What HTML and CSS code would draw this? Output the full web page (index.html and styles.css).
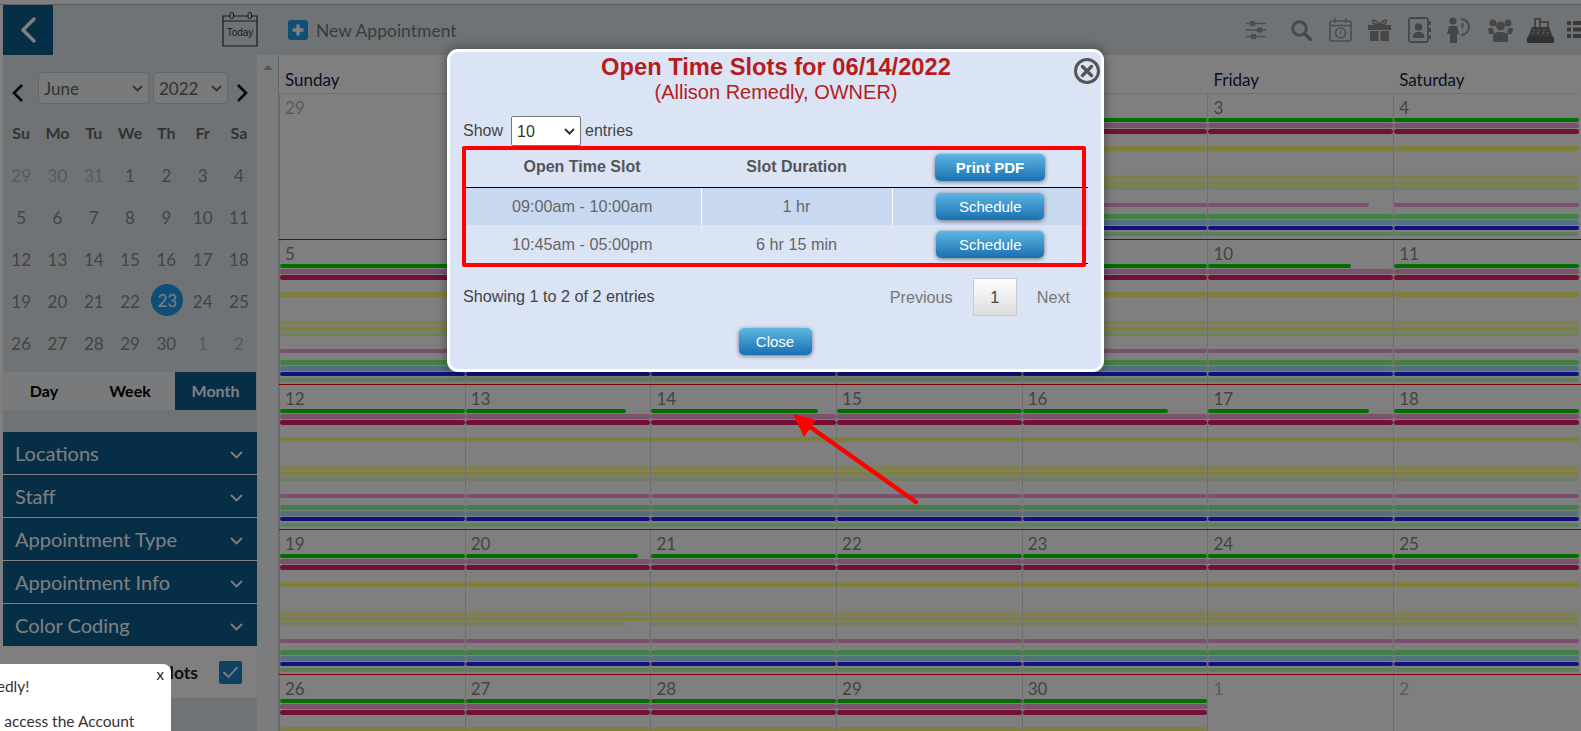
FILE: index.html
```html
<!DOCTYPE html>
<html lang="en">
<head>
<meta charset="utf-8">
<title>Calendar</title>
<link rel="stylesheet" href="styles.css">
</head>
<body>
<div class="topline"></div>
<div class="app">
  <header class="header">
    <a class="back"><svg width="18" height="26" viewBox="0 0 18 26"><path d="M15 2 4 13l11 11" fill="none" stroke="#fff" stroke-width="3.5" stroke-linecap="round" stroke-linejoin="round"/></svg></a>
    <div class="today">
      <svg width="36" height="36" viewBox="0 0 36 36"><path d="M1 5h34v30H1zM1 10h34" fill="none" stroke="#333" stroke-width="1.2"/><rect x="8" y="1.5" width="3.5" height="6" rx="1.5" fill="#dfe8ef" stroke="#333"/><rect x="26" y="1.5" width="3.5" height="6" rx="1.5" fill="#dfe8ef" stroke="#333"/><text x="18" y="25" text-anchor="middle" class="today-text">Today</text></svg>
    </div>
    <div class="new-appt">
      <svg width="20" height="20" viewBox="0 0 20 20"><rect width="20" height="20" rx="3" fill="#1c9dee"/><path d="M10 4.5v11M4.5 10h11" stroke="#fff" stroke-width="3.4"/></svg>
      <span>New Appointment</span>
    </div>
    <div class="tools">
      <svg width="20" height="20" viewBox="0 0 20 20" class="t1"><path d="M0 3.5h20M0 10h20M0 16.5h20" stroke="#999" stroke-width="1.6"/><rect x="4" y="1" width="5" height="5" fill="#999"/><rect x="11" y="7.5" width="5" height="5" fill="#999"/><rect x="5" y="14" width="5" height="5" fill="#999"/></svg>
      <svg width="21" height="21" viewBox="0 0 21 21" class="t2"><circle cx="8.5" cy="8.5" r="6.8" fill="none" stroke="#909090" stroke-width="3"/><path d="m13.5 13.5 6 6" stroke="#909090" stroke-width="3.4" stroke-linecap="round"/></svg>
      <svg width="23" height="24" viewBox="0 0 23 24" class="t3"><rect x="1" y="3" width="21" height="20" rx="2" fill="none" stroke="#999" stroke-width="1.6"/><path d="M1 7.5h21M6 0v5M17 0v5" stroke="#999" stroke-width="1.6"/><circle cx="11.5" cy="15" r="5" fill="none" stroke="#999" stroke-width="1.6"/><path d="M11.5 12.5V15.5" stroke="#999" stroke-width="1.4"/></svg>
      <svg width="23" height="22" viewBox="0 0 23 22" class="t4"><path d="M0 6h23v5H0zM2 12h8.500v10H2zM12.500 12H21v10h-8.500z" fill="#8c8c8c"/><path d="M11.500 6C8 0 3 0 5 3.500 6 5 9 6 11.500 6c2.500 0 5.500-1 6.500-2.500C20 0 15 0 11.500 6z" fill="none" stroke="#8c8c8c" stroke-width="1.6"/></svg>
      <svg width="24" height="26" viewBox="0 0 24 26" class="t5"><rect x="1" y="1" width="19" height="24" rx="2" fill="none" stroke="#8c8c8c" stroke-width="1.8"/><circle cx="10.500" cy="10" r="3.800" fill="#8c8c8c"/><path d="M4.500 21c0-4.500 2.500-6 6-6s6 1.500 6 6z" fill="#8c8c8c"/><path d="M22 4v4M22 11v4M22 18v4" stroke="#8c8c8c" stroke-width="2"/></svg>
      <svg width="25" height="26" viewBox="0 0 25 26" class="t6"><circle cx="6" cy="4" r="3.500" fill="#8c8c8c"/><path d="M2 9h8l2 8h-2v9H3v-9H0z" fill="#8c8c8c"/><path d="M14 2a8 8 0 1 1 0 16" fill="none" stroke="#8c8c8c" stroke-width="1.800"/><path d="M15.500 6v5" stroke="#8c8c8c" stroke-width="1.800"/></svg>
      <svg width="25" height="23" viewBox="0 0 25 23" class="t7"><circle cx="5" cy="4" r="3.500" fill="#8c8c8c"/><circle cx="20" cy="4" r="3.500" fill="#8c8c8c"/><circle cx="12.500" cy="7" r="4.500" fill="#8c8c8c"/><path d="M0 9h5l1 6H1zM20 9h5l-1 6h-5zM5 23v-6c0-3 3-4 7.500-4s7.500 1 7.500 4v6z" fill="#8c8c8c"/></svg>
      <svg width="27" height="25" viewBox="0 0 27 25" class="t8"><path d="M5 9h17l4 10H1z" fill="#707070"/><path d="M8 9V1h5v8M14 4h7v5" fill="none" stroke="#707070" stroke-width="1.600"/><rect y="19" width="27" height="6" rx="1" fill="#606060"/><path d="M6 12h2M11 12h2M16 12h2M5 15h2M10 15h2M15 15h2M20 15h2" stroke="#ccc"/></svg>
      <svg width="14" height="22" viewBox="0 0 14 22" class="t9"><path d="M0 2h4v4H0zM6 2h8v4H6zM0 8.500h4v4H0zM6 8.500h8v4H6zM0 15h4v4H0zM6 15h8v4H6z" fill="#707070"/></svg>
    </div>
  </header>

  <div class="body">
    <aside class="side">
      <div class="nav">
        <svg width="13" height="20" viewBox="0 0 13 20" class="chev"><path d="M11 2 3 10l8 8" fill="none" stroke="#111" stroke-width="2.600"/></svg>
        <select class="sel-month"><option>June</option></select>
        <select class="sel-year"><option>2022</option></select>
        <svg width="13" height="20" viewBox="0 0 13 20" class="chev"><path d="m2 2 8 8-8 8" fill="none" stroke="#111" stroke-width="2.600"/></svg>
      </div>
      <div class="mini dow"><b>Su</b><b>Mo</b><b>Tu</b><b>We</b><b>Th</b><b>Fr</b><b>Sa</b></div>
      <div class="mini days">
        <span class="off">29</span><span class="off">30</span><span class="off">31</span><span>1</span><span>2</span><span>3</span><span>4</span>
        <span>5</span><span>6</span><span>7</span><span>8</span><span>9</span><span>10</span><span>11</span>
        <span>12</span><span>13</span><span>14</span><span>15</span><span>16</span><span>17</span><span>18</span>
        <span>19</span><span>20</span><span>21</span><span>22</span><span class="cur"><em>23</em></span><span>24</span><span>25</span>
        <span>26</span><span>27</span><span>28</span><span>29</span><span>30</span><span class="off">1</span><span class="off">2</span>
      </div>
      <div class="views"><a>Day</a><a>Week</a><a class="on">Month</a></div>
      <ul class="acc">
        <li>Locations<svg width="13" height="8" viewBox="0 0 13 8"><path d="m1 1 5.500 5.500L12 1" fill="none" stroke="#fff" stroke-width="1.800"/></svg></li>
        <li>Staff<svg width="13" height="8" viewBox="0 0 13 8"><path d="m1 1 5.500 5.500L12 1" fill="none" stroke="#fff" stroke-width="1.800"/></svg></li>
        <li>Appointment Type<svg width="13" height="8" viewBox="0 0 13 8"><path d="m1 1 5.500 5.500L12 1" fill="none" stroke="#fff" stroke-width="1.800"/></svg></li>
        <li>Appointment Info<svg width="13" height="8" viewBox="0 0 13 8"><path d="m1 1 5.500 5.500L12 1" fill="none" stroke="#fff" stroke-width="1.800"/></svg></li>
        <li>Color Coding<svg width="13" height="8" viewBox="0 0 13 8"><path d="m1 1 5.500 5.500L12 1" fill="none" stroke="#fff" stroke-width="1.800"/></svg></li>
      </ul>
      <div class="slots-row">
        <span>Open Time Slots</span>
        <i class="check"><svg width="17" height="14" viewBox="0 0 17 14"><path d="m1.500 7 5 5L15.500 2" fill="none" stroke="#fff" stroke-width="1.800"/></svg></i>
      </div>
    </aside>
    <div class="track"><i></i></div>
    <main class="cal">
      <div class="week head"><div>Sunday</div><div>Monday</div><div>Tuesday</div><div>Wednesday</div><div>Thursday</div><div>Friday</div><div>Saturday</div></div>
      <div class="week">
        <div class="c off"><p>29</p></div>
        <div class="c off"><p>30</p></div>
        <div class="c off"><p>31</p></div>
        <div class="c"><p>1</p><i class="g"></i><i class="p"></i><i class="r"></i><i class="y"></i><i class="k"></i><i class="j"></i><i class="l"></i><i class="q"></i><i class="m"></i><i class="s"></i><i class="n"></i><i class="f"></i></div>
        <div class="c"><p>2</p><i class="g"></i><i class="p"></i><i class="r"></i><i class="y"></i><i class="k"></i><i class="j"></i><i class="l"></i><i class="q"></i><i class="m"></i><i class="s"></i><i class="n"></i><i class="f"></i></div>
        <div class="c"><p>3</p><i class="g"></i><i class="p"></i><i class="r"></i><i class="y"></i><i class="k"></i><i class="j"></i><i class="l"></i><i class="q" style="width:161px"></i><i class="m"></i><i class="s"></i><i class="n"></i><i class="f"></i></div>
        <div class="c"><p>4</p><i class="g"></i><i class="p"></i><i class="r"></i><i class="y"></i><i class="k"></i><i class="j"></i><i class="l"></i><i class="q"></i><i class="m"></i><i class="s"></i><i class="n"></i><i class="f"></i></div>
      </div>
      <div class="week">
        <div class="c"><p>5</p><i class="g"></i><i class="p"></i><i class="r"></i><i class="y"></i><i class="k"></i><i class="j"></i><i class="l"></i><i class="q"></i><i class="m"></i><i class="s"></i><i class="n"></i><i class="f"></i></div>
        <div class="c"><p>6</p><i class="g"></i><i class="p"></i><i class="r"></i><i class="y"></i><i class="k"></i><i class="j"></i><i class="l"></i><i class="q"></i><i class="m"></i><i class="s"></i><i class="n"></i><i class="f"></i></div>
        <div class="c"><p>7</p><i class="g"></i><i class="p"></i><i class="r"></i><i class="y"></i><i class="k"></i><i class="j"></i><i class="l"></i><i class="q"></i><i class="m"></i><i class="s"></i><i class="n"></i><i class="f"></i></div>
        <div class="c"><p>8</p><i class="g"></i><i class="p"></i><i class="r"></i><i class="y"></i><i class="k"></i><i class="j"></i><i class="l"></i><i class="q"></i><i class="m"></i><i class="s"></i><i class="n"></i><i class="f"></i></div>
        <div class="c"><p>9</p><i class="g"></i><i class="p"></i><i class="r"></i><i class="y"></i><i class="k"></i><i class="j"></i><i class="l"></i><i class="q"></i><i class="m"></i><i class="s"></i><i class="n"></i><i class="f"></i></div>
        <div class="c"><p>10</p><i class="g" style="width:143px"></i><i class="p"></i><i class="r"></i><i class="y"></i><i class="k"></i><i class="j"></i><i class="l"></i><i class="q"></i><i class="m"></i><i class="s"></i><i class="n"></i><i class="f"></i></div>
        <div class="c"><p>11</p><i class="g"></i><i class="p"></i><i class="r"></i><i class="y"></i><i class="k"></i><i class="j"></i><i class="l"></i><i class="q"></i><i class="m"></i><i class="s"></i><i class="n"></i><i class="f"></i></div>
      </div>
      <div class="week">
        <div class="c"><p>12</p><i class="g"></i><i class="p"></i><i class="r"></i><i class="y"></i><i class="k"></i><i class="j"></i><i class="l"></i><i class="q"></i><i class="m"></i><i class="s"></i><i class="n"></i><i class="f"></i></div>
        <div class="c"><p>13</p><i class="g" style="width:160px"></i><i class="p"></i><i class="r"></i><i class="y"></i><i class="k"></i><i class="j"></i><i class="l"></i><i class="q"></i><i class="m"></i><i class="s"></i><i class="n"></i><i class="f"></i></div>
        <div class="c"><p>14</p><i class="g" style="width:167px"></i><i class="p"></i><i class="r"></i><i class="y"></i><i class="k"></i><i class="j"></i><i class="l"></i><i class="q"></i><i class="m"></i><i class="s"></i><i class="n"></i><i class="f"></i></div>
        <div class="c"><p>15</p><i class="g"></i><i class="p"></i><i class="r"></i><i class="y"></i><i class="k"></i><i class="j"></i><i class="l"></i><i class="q"></i><i class="m"></i><i class="s"></i><i class="n"></i><i class="f"></i></div>
        <div class="c"><p>16</p><i class="g" style="width:145px"></i><i class="p"></i><i class="r"></i><i class="y"></i><i class="k"></i><i class="j"></i><i class="l"></i><i class="q"></i><i class="m"></i><i class="s"></i><i class="n"></i><i class="f"></i></div>
        <div class="c"><p>17</p><i class="g" style="width:161px"></i><i class="p"></i><i class="r"></i><i class="y"></i><i class="k"></i><i class="j"></i><i class="l"></i><i class="q"></i><i class="m"></i><i class="s"></i><i class="n"></i><i class="f"></i></div>
        <div class="c"><p>18</p><i class="g"></i><i class="p"></i><i class="r"></i><i class="y"></i><i class="k"></i><i class="j"></i><i class="l"></i><i class="q"></i><i class="m"></i><i class="s"></i><i class="n"></i><i class="f"></i></div>
      </div>
      <div class="week">
        <div class="c"><p>19</p><i class="g"></i><i class="p"></i><i class="r"></i><i class="y"></i><i class="k"></i><i class="j"></i><i class="l"></i><i class="q"></i><i class="m"></i><i class="s"></i><i class="n"></i><i class="f"></i></div>
        <div class="c"><p>20</p><i class="g" style="width:172px"></i><i class="p"></i><i class="r"></i><i class="y"></i><i class="k"></i><i class="j"></i><i class="l" style="width:160px"></i><i class="q"></i><i class="m"></i><i class="s"></i><i class="n"></i><i class="f"></i></div>
        <div class="c"><p>21</p><i class="g"></i><i class="p"></i><i class="r"></i><i class="y"></i><i class="k"></i><i class="j"></i><i class="l"></i><i class="q"></i><i class="m"></i><i class="s"></i><i class="n"></i><i class="f"></i></div>
        <div class="c"><p>22</p><i class="g"></i><i class="p"></i><i class="r"></i><i class="y"></i><i class="k"></i><i class="j"></i><i class="l"></i><i class="q"></i><i class="m"></i><i class="s"></i><i class="n"></i><i class="f"></i></div>
        <div class="c"><p>23</p><i class="g"></i><i class="p"></i><i class="r"></i><i class="y"></i><i class="k"></i><i class="j"></i><i class="l"></i><i class="q"></i><i class="m"></i><i class="s"></i><i class="n"></i><i class="f"></i></div>
        <div class="c"><p>24</p><i class="g"></i><i class="p"></i><i class="r"></i><i class="y"></i><i class="k"></i><i class="j"></i><i class="l"></i><i class="q"></i><i class="m"></i><i class="s"></i><i class="n"></i><i class="f"></i></div>
        <div class="c"><p>25</p><i class="g"></i><i class="p"></i><i class="r"></i><i class="y"></i><i class="k"></i><i class="j"></i><i class="l"></i><i class="q"></i><i class="m"></i><i class="s"></i><i class="n"></i><i class="f"></i></div>
      </div>
      <div class="week">
        <div class="c"><p>26</p><i class="g"></i><i class="p"></i><i class="r"></i><i class="y"></i></div>
        <div class="c"><p>27</p><i class="g"></i><i class="p"></i><i class="r"></i><i class="y"></i></div>
        <div class="c"><p>28</p><i class="g"></i><i class="p"></i><i class="r"></i><i class="y"></i></div>
        <div class="c"><p>29</p><i class="g"></i><i class="p"></i><i class="r"></i><i class="y"></i></div>
        <div class="c"><p>30</p><i class="g"></i><i class="p"></i><i class="r"></i><i class="y"></i></div>
        <div class="c off"><p>1</p></div>
        <div class="c off"><p>2</p></div>
      </div>
    </main>
  </div>
</div>

<div class="overlay"></div>

<div class="toast">
  <span class="toast-x">x</span>
  <p>Welcome, Allison Remedly!</p>
  <p class="toast-2">Click the profile icon to&nbsp; access the Account</p>
</div>

<section class="modal">
  <svg class="modal-x" width="28" height="28" viewBox="0 0 28 28"><circle cx="14" cy="14" r="11.500" fill="none" stroke="#555" stroke-width="3"/><path d="m9.500 9.500 9 9M18.500 9.500l-9 9" stroke="#555" stroke-width="3.400" stroke-linecap="round"/></svg>
  <h2>Open Time Slots for 06/14/2022</h2>
  <h3>(Allison Remedly, OWNER)</h3>
  <div class="length">Show <select><option>10</option></select> entries</div>
  <table class="slots">
    <thead><tr><th>Open Time Slot</th><th>Slot Duration</th><th><button class="btn strong">Print PDF</button></th></tr></thead>
    <tbody>
      <tr class="odd"><td>09:00am - 10:00am</td><td>1 hr</td><td><button class="btn">Schedule</button></td></tr>
      <tr><td>10:45am - 05:00pm</td><td>6 hr 15 min</td><td><button class="btn">Schedule</button></td></tr>
    </tbody>
  </table>
  <div class="foot">
    <span>Showing 1 to 2 of 2 entries</span>
    <div class="pager"><a>Previous</a><a class="page">1</a><a>Next</a></div>
  </div>
  <div class="close-row"><button class="btn close">Close</button></div>
  <div class="redbox"></div>
</section>

<svg class="arrow" width="1581" height="731" viewBox="0 0 1581 731"><path d="M916 502 806 424" stroke="#f00" stroke-width="4.500" stroke-linecap="round"/><path d="m793 414 23 6-12 17z" fill="#f00"/></svg>
</body>
</html>
```
FILE: styles.css
```css
* { box-sizing: border-box; }
html, body { margin: 0; height: 731px; overflow: hidden; }
body { position: relative; background: #fff; font-family: Lato, "Open Sans", sans-serif; color: #333; }

.topline { height: 5px; border-bottom: 1px solid #bbb; background: #fff; }
.app { padding-left: 3px; }

.header { display: flex; align-items: center; height: 50px; background: #e0e7ec; }
.back { width: 50px; height: 50px; display: flex; align-items: center; justify-content: center; background: #0c5c8c; }
.today { margin-left: 169px; height: 36px; margin-top: -2px; }
.today-text { font: 400 10px "Liberation Sans", sans-serif; fill: #333; }
.new-appt { display: flex; align-items: center; gap: 8px; margin-left: 30px; font-size: 17.500px; color: #777; }
.tools { display: flex; align-items: center; margin-left: auto; }
.tools svg { display: block; flex: none; }
.tools .t1 { margin-right: 25px; }
.tools .t2 { margin-right: 17px; }
.tools .t3 { margin-right: 16px; }
.tools .t4 { margin-right: 17px; }
.tools .t5 { margin-right: 15px; }
.tools .t6 { margin-right: 16px; }
.tools .t7 { margin-right: 14px; }
.tools .t8 { margin-right: 13px; }

.body { display: flex; height: 676px; overflow: hidden; }
.side { width: 254px; flex: none; background: #e0e7ec; }
.track { width: 22px; flex: none; background: #f6f8fa; border-right: 1px solid #ccc; padding: 10px 0 0 6px; }
.track i { display: block; width: 0; height: 0; border: 5px solid transparent; border-top: 0; border-bottom-color: #aaa; border-bottom-width: 5px; }

.nav { display: flex; align-items: center; height: 32px; margin-top: 17px; padding-left: 8px; }
.nav select { appearance: none; height: 32px; border: 1px solid #ccc; border-radius: 4px; background: #f2f4f6 url("data:image/svg+xml,%3Csvg xmlns='http://www.w3.org/2000/svg' width='11' height='7'%3E%3Cpath d='m1 1 4.500 4.500L10 1' fill='none' stroke='%23666' stroke-width='1.800'/%3E%3C/svg%3E") no-repeat right 5px center; font: 17px Lato, sans-serif; color: #666; padding: 0 0 0 5px; }
.sel-month { width: 111px; margin: 0 4px 0 14px; }
.sel-year { width: 75px; margin-right: 8px; }
.chev { margin-top: 10px; }

.mini { display: grid; grid-template-columns: repeat(7, 36.300px); text-align: center; }
.dow { margin-top: 17px; height: 24px; line-height: 24px; font-size: 16px; }
.dow b { font-weight: 700; color: #666; }
.days { margin-top: 13px; grid-auto-rows: 42px; font-size: 17px; }
.days span { display: flex; align-items: center; justify-content: center; color: #888; height: 42px; padding-top: 8px; margin-top: -8px; }
.days .off { color: #b4b4b4; }
.days .cur { padding-left: 2px; }
.days em { font-style: normal; display: flex; align-items: center; justify-content: center; width: 32px; height: 32px; margin-top: -2px; border-radius: 50%; background: #1c9dee; color: #fff; }

.views { display: flex; height: 38px; margin-top: 4px; background: #f2f5f8; width: 253px; line-height: 38px; text-align: center; font-size: 16px; font-weight: 700; color: #000; }
.views a:nth-child(1) { width: 82px; }
.views a:nth-child(2) { width: 90px; }
.views .on { flex: 1; background: #0c5c8c; color: #fff; }

.acc { list-style: none; margin: 22px 0 0; padding: 0; }
.acc li { display: flex; align-items: center; justify-content: space-between; height: 43px; padding: 0 14px 0 12px; background: #0c5c8c; border-top: 1px solid #fff; color: #fff; font-size: 20px; }
.acc li:first-child { border-top: 0; height: 42px; }
.acc svg { margin-top: 3px; }

.slots-row { display: flex; align-items: center; justify-content: flex-end; height: 52px; background: #fff; padding-right: 15px; gap: 21px; font-size: 17.500px; font-weight: 700; color: #222; }
.check { display: flex; align-items: center; justify-content: center; width: 23px; height: 23px; background: #1c84c8; border-radius: 2px; }

.cal { flex: 1; min-width: 0; overflow: hidden; }
.week { display: grid; grid-template-columns: repeat(7, 185.700px); height: 145px; border-top: 1px solid #f00; }
.week.head { height: 39px; border-top: 0; font-size: 17px; color: #202050; }
.head div { padding: 14px 0 0 6px; border-bottom: 1px solid #e4e4e4; }
.week:nth-child(2) { border-top: 0; }
.c { position: relative; border-left: 1px solid #ddd; height: 144px; }
.c p { margin: 0; height: 24px; padding: 5px 0 0 5px; font-size: 17px; line-height: 17px; color: #888; }
.c.off p { color: #b4b4b4; }
.c i { display: block; height: 4px; border-radius: 3px; }
.g { background: #00df00; }
.p { background: #f2a5d8; height: 5px !important; margin-top: 1px; }
.r { background: #e8206a; height: 5px !important; margin-top: 1px; }
.y { background: #ffff7a; height: 5px !important; margin-top: 12px; }
.k { background: #ffffa0; height: 5px !important; margin-top: 24px; }
.j { background: #ffff8a; margin-top: 1px; }
.l { background: #dfffbf; margin-top: 1px; }
.q { background: #f2a0da; margin-top: 13px; }
.m { background: #86ff8c; height: 5px !important; margin-top: 7px; }
.s { background: #a4e0fc; height: 5px !important; margin-top: 1px; }
.n { background: #2222ff; margin-top: 1px; }
.f { background: #bfffb8; margin-top: 2px; }

.overlay { position: absolute; inset: 0; background: rgba(0, 0, 0, .5); }

.toast { position: absolute; left: -154px; top: 664px; width: 325px; height: 67px; overflow: hidden; background: #fff; border-radius: 0 8px 0 0; font-size: 15.500px; color: #333; padding: 12px 0 0 0; white-space: nowrap; }
.toast p { margin: 0; line-height: 20px; }
.toast-2 { margin: 15px 0 0 -7px !important; }
.toast-x { position: absolute; right: 7px; top: 0; line-height: 20px; font-size: 15px; color: #222; }

.modal { position: absolute; left: 447px; top: 49px; width: 657px; height: 323px; background: #dbe4f5; border: 3px solid #fff; border-radius: 11px; box-shadow: 0 0 12px rgba(0, 0, 0, .45); font-family: "Liberation Sans", Arial, sans-serif; color: #444; padding: 0 16px 0 13px; }
.modal-x { position: absolute; right: 0; top: 5px; }
.modal h2 { margin: 0 0 0 4px; padding-top: 1px; text-align: center; font-size: 23.700px; line-height: 28px; color: #b71c1c; }
.modal h3 { margin: 0 0 0 4px; text-align: center; font-size: 20px; line-height: 23px; font-weight: 400; color: #b71c1c; }
.length { display: flex; align-items: center; gap: 4px; height: 30px; margin-top: 12px; font-size: 16px; }
.length select { appearance: none; width: 70px; height: 30px; background: #fff url("data:image/svg+xml,%3Csvg xmlns='http://www.w3.org/2000/svg' width='11' height='7'%3E%3Cpath d='m1 1 4.500 4.500L10 1' fill='none' stroke='%23333' stroke-width='2'/%3E%3C/svg%3E") no-repeat right 5px center; border: 1px solid #777; border-radius: 2px; margin: 0 0 0 4px; padding: 0 0 0 5px; font: 16px "Liberation Sans", sans-serif; color: #333; }

.slots { width: 622px; margin: 0 0 0 3px; border-collapse: collapse; table-layout: fixed; text-align: center; font-size: 16.200px; }
.slots th { height: 41px; padding: 2px 0 0; border-bottom: 1px solid #000; color: #555; font-size: 16px; }
.slots th:nth-child(1) { width: 235px; padding-right: 3px; }
.slots th:nth-child(2) { width: 191px; }
.slots td { height: 38.500px; padding: 0; color: #666; border-left: 1px solid #e4e8ee; }
.slots td:first-child { border-left: 0; padding-right: 2px; }
.slots tbody tr:last-child td { border-bottom: 1px solid #000; }
.slots .odd td { background: #c8d8f0; height: 38px; border-left-color: #fff; }

.btn { height: 27px; border: 0; border-radius: 5px; background: linear-gradient(#5cb6e2, #1a70b2); color: #fff; font: 15px "Liberation Sans", sans-serif; box-shadow: 0 1px 4px rgba(0, 0, 0, .5); vertical-align: middle; padding: 0; width: 108px; }
.btn.strong { font-weight: 700; width: 110px; }
.btn.close { width: 73px; }

.foot { display: flex; justify-content: space-between; align-items: center; height: 38px; margin-top: 14px; font-size: 16.200px; }
.foot > span { margin-top: -2px; }
.pager { display: flex; align-items: center; padding-right: 15px; color: #777; }
.page { display: flex; align-items: center; justify-content: center; width: 44px; height: 38px; margin: 0 20px; border: 1px solid #ccc; background: linear-gradient(#fff, #ddd); color: #444; }
.close-row { display: flex; justify-content: center; margin-top: 12px; padding-left: 2px; }

.redbox { position: absolute; left: 12px; top: 94px; width: 624px; height: 121px; border: 4px solid #f00; border-radius: 2px; pointer-events: none; }
.arrow { position: absolute; left: 0; top: 0; pointer-events: none; }
```
